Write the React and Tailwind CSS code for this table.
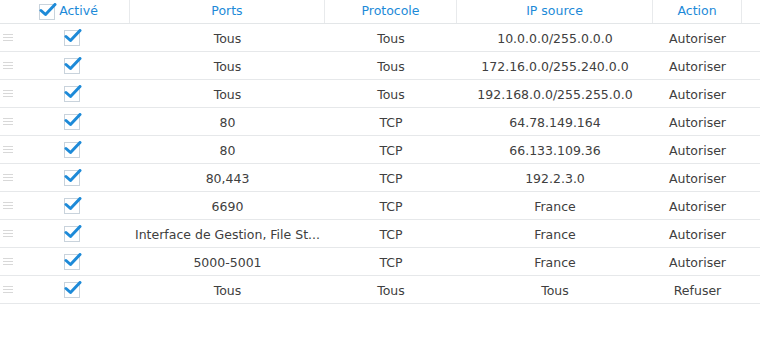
const rows = [
  { ports: 'Tous', proto: 'Tous', ip: '10.0.0.0/255.0.0.0', action: 'Autoriser' },
  { ports: 'Tous', proto: 'Tous', ip: '172.16.0.0/255.240.0.0', action: 'Autoriser' },
  { ports: 'Tous', proto: 'Tous', ip: '192.168.0.0/255.255.0.0', action: 'Autoriser' },
  { ports: '80', proto: 'TCP', ip: '64.78.149.164', action: 'Autoriser' },
  { ports: '80', proto: 'TCP', ip: '66.133.109.36', action: 'Autoriser' },
  { ports: '80,443', proto: 'TCP', ip: '192.2.3.0', action: 'Autoriser' },
  { ports: '6690', proto: 'TCP', ip: 'France', action: 'Autoriser' },
  { ports: 'Interface de Gestion, File St...', proto: 'TCP', ip: 'France', action: 'Autoriser' },
  { ports: '5000-5001', proto: 'TCP', ip: 'France', action: 'Autoriser' },
  { ports: 'Tous', proto: 'Tous', ip: 'Tous', action: 'Refuser' },
];

const Check = () => (
  <span className="flex h-4 w-4 items-center justify-center border border-[#c9d3dc] bg-white">
    <svg width="18" height="14" viewBox="0 0 18 14" className="-mt-[3px] ml-[1px] shrink-0">
      <path d="M2 7.5 L6.5 11.5 L16 1.5" fill="none" stroke="#1d8ad8" strokeWidth="3" strokeLinecap="round" strokeLinejoin="round" />
    </svg>
  </span>
);

const Handle = () => (
  <div className="flex w-[10px] flex-col gap-[2px]">
    <span className="h-px bg-[#d8d8d8]" />
    <span className="h-px bg-[#d8d8d8]" />
    <span className="h-px bg-[#d8d8d8]" />
  </div>
);

const cols = 'grid grid-cols-[130px_195px_132px_196px_89px_18px]';

export default function App() {
  return (
    <div className="h-[357px] w-[772px] bg-white text-[12.5px]" style={{ fontFamily: 'Verdana, "DejaVu Sans", sans-serif' }}>
      <div className="w-[760px]">
        {/* header */}
        <div className={`${cols} h-[24px] border-b border-[#e3e6e8] text-[#1d8ad8]`}>
          <div className="flex items-center justify-center gap-[4px] border-r border-[#e8eaec] pl-[8px]">
            <Check />
            <span>Activé</span>
          </div>
          <div className="flex items-center justify-center border-r border-[#e8eaec]">Ports</div>
          <div className="flex items-center justify-center border-r border-[#e8eaec]">Protocole</div>
          <div className="flex items-center justify-center border-r border-[#e8eaec]">IP source</div>
          <div className="flex items-center justify-center border-r border-[#e8eaec]">Action</div>
          <div />
        </div>
        {/* rows */}
        {rows.map((r, i) => (
          <div key={i} className={`${cols} h-[28px] border-b border-[#e6e8ea] text-[#404040]`}>
            <div className="flex items-center pl-[3px]">
              <Handle />
              <div className="ml-[51px]"><Check /></div>
            </div>
            <div className="flex items-center justify-center whitespace-nowrap pt-[3px]">{r.ports}</div>
            <div className="flex items-center justify-center pt-[3px]">{r.proto}</div>
            <div className="flex items-center justify-center pt-[3px]">{r.ip}</div>
            <div className="flex items-center justify-center pt-[3px]">{r.action}</div>
            <div />
          </div>
        ))}
      </div>
    </div>
  );
}
